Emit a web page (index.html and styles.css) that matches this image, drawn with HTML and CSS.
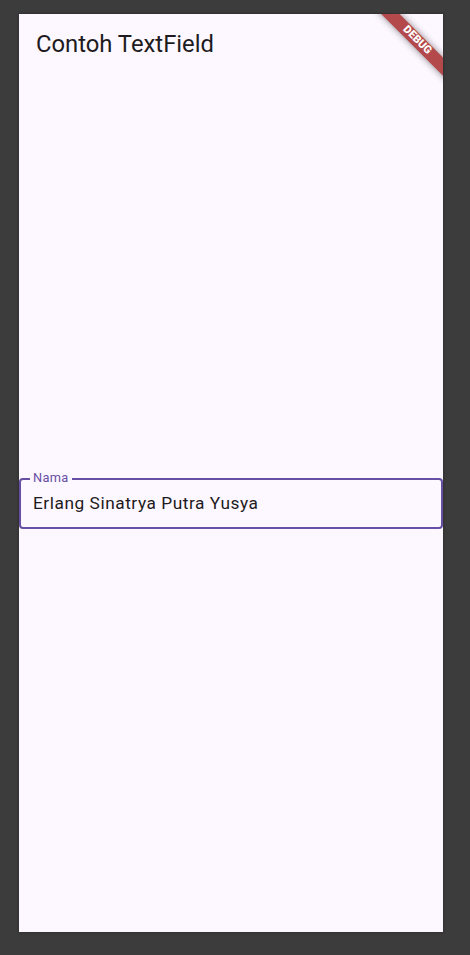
FILE: index.html
```html
<!DOCTYPE html>
<html lang="id">
<head>
<meta charset="utf-8">
<title>Contoh TextField</title>
<link rel="stylesheet" href="styles.css">
</head>
<body>
  <div class="device">
    <header class="app-bar">
      <h1 class="app-title">Contoh TextField</h1>
    </header>
    <main class="content">
      <fieldset class="text-field">
        <legend class="field-label">Nama</legend>
        <input class="field-input" type="text" value="Erlang Sinatrya Putra Yusya">
      </fieldset>
    </main>
    <div class="debug-banner">DEBUG</div>
  </div>
</body>
</html>
```

FILE: styles.css
```css
html, body {
  margin: 0;
  padding: 0;
}

body {
  background: #3c3c3c;
  font-family: Roboto, "Noto Sans", "Liberation Sans", sans-serif;
  width: 470px;
  height: 955px;
  overflow: hidden;
}

.device {
  position: relative;
  margin: 14px 0 0 19px;
  width: 424px;
  height: 918px;
  background: #fdf7ff;
  overflow: hidden;
  display: flex;
  flex-direction: column;
  box-shadow: 0 0 3px rgba(0, 0, 0, 0.35);
}

.app-bar {
  height: 64px;
  flex: 0 0 64px;
  box-sizing: border-box;
  padding: 16px 16px 0 17px;
}

.app-title {
  margin: 0;
  font-size: 23.8px;
  line-height: 28px;
  font-weight: 400;
  color: #1d1b20;
}

.content {
  flex: 1;
  display: flex;
  flex-direction: column;
  justify-content: center;
}

.text-field {
  margin: 0 0 9px 0;
  border: 2px solid #6750a4;
  border-radius: 4px;
  padding: 5px 12px 12px 12px;
  min-width: 0;
}

.field-label {
  margin-left: -3px;
  padding: 0 4px 2px 3px;
  font-size: 12.8px;
  line-height: 12px;
  color: #6750a4;
  letter-spacing: 0.3px;
}

.field-input {
  display: block;
  width: 100%;
  box-sizing: border-box;
  height: 24px;
  border: none;
  outline: none;
  background: transparent;
  padding: 0;
  margin: 0;
  font-family: Roboto, "Noto Sans", "Liberation Sans", sans-serif;
  font-size: 17.3px;
  letter-spacing: 0.54px;
  color: #1d1b20;
}

.debug-banner {
  position: absolute;
  top: 19.75px;
  right: -24.25px;
  width: 100px;
  height: 12.5px;
  line-height: 12.5px;
  transform: rotate(45deg);
  background: #b3494b;
  box-shadow: 0 0 7px rgba(0, 0, 0, 0.45);
  color: #ffffff;
  font-size: 11px;
  font-weight: 900;
  text-align: center;
  font-family: Roboto, "Liberation Sans", sans-serif;
}
```
